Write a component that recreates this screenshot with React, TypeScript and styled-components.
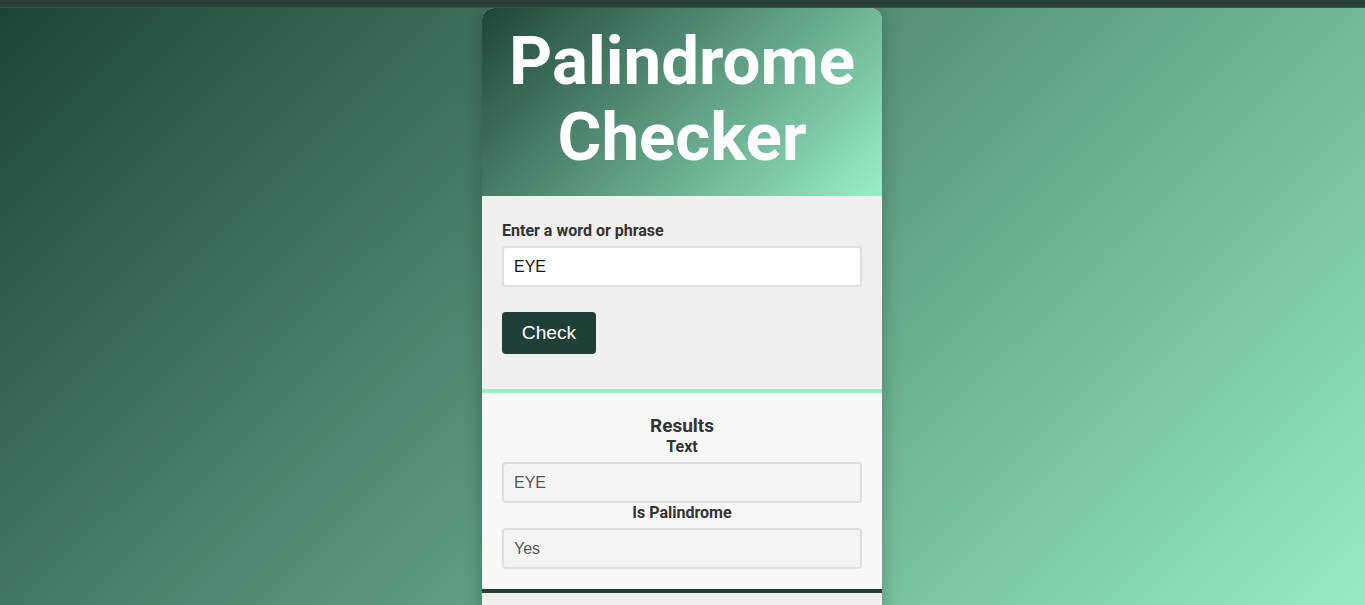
import React from "react";
import styled, { createGlobalStyle } from "styled-components";

const GlobalStyle = createGlobalStyle`
  html, body { margin: 0; padding: 0; }
  body {
    font-family: Roboto, "Liberation Sans", sans-serif;
    background: #2a3e37;
    min-height: 605px;
    overflow: hidden;
  }
`;

const Page = styled.div`
  min-height: 605px;
  display: flex;
  flex-direction: column;
`;

const TopBar = styled.div`
  height: 7px;
  background: #2b3f38;
  border-bottom: 1px solid #3e514a;
  flex: none;
`;

const Main = styled.main`
  flex: 1;
  background: linear-gradient(135deg, #1e4437 0%, #99efc7 100%);
  display: flex;
  justify-content: center;
  align-items: flex-start;
  height: 597px;
  overflow: hidden;
  padding-right: 1px;
`;

const Card = styled.div`
  width: 400px;
  border-radius: 12px 12px 0 0;
  overflow: hidden;
  box-shadow: 0 4px 20px rgba(0, 0, 0, 0.25);
  background: #f0f0f0;
  min-height: 640px;
`;

const Header = styled.header`
  background: linear-gradient(135deg, #1f4437 0%, #99efc7 100%);
  padding: 15px 10px 21px;
  text-align: center;
`;

const Title = styled.h1`
  margin: 0;
  color: #ffffff;
  font-family: Roboto, sans-serif;
  font-weight: 700;
  font-size: 67.2px;
  line-height: 76px;
`;

const FormSection = styled.section`
  background: #f0f0f0;
  padding: 25px 20px 35px;
  display: flex;
  flex-direction: column;
  align-items: flex-start;
`;

const Label = styled.label`
  display: block;
  font-family: Roboto, sans-serif;
  font-weight: 700;
  font-size: 16px;
  line-height: 19px;
  color: #333333;
  margin-bottom: 6px;
`;

const Field = styled.div<{ $muted?: boolean }>`
  box-sizing: border-box;
  width: 360px;
  height: 41px;
  border: 2px solid #dddddd;
  border-radius: 4px;
  background: ${(p) => (p.$muted ? "#f4f4f4" : "#ffffff")};
  padding: 0 10px;
  display: flex;
  align-items: center;
  font-family: "Liberation Sans", Arial, sans-serif;
  font-size: 16px;
  color: ${(p) => (p.$muted ? "#555555" : "#111111")};
`;

const Button = styled.button`
  margin-top: 25px;
  width: 94px;
  height: 42px;
  border: none;
  border-radius: 4px;
  background: #1f4036;
  color: #ffffff;
  font-family: "Liberation Sans", Arial, sans-serif;
  font-size: 19.2px;
  padding: 0;
  cursor: pointer;
`;

const Results = styled.section`
  background: #f8f8f8;
  border-top: 4px solid #98efc6;
  border-bottom: 4px solid #1f4036;
  padding: 22px 20px 20px;
  display: flex;
  flex-direction: column;
  align-items: center;
`;

const ResultsTitle = styled.h2`
  margin: 0;
  font-family: Roboto, sans-serif;
  font-weight: 700;
  font-size: 19px;
  line-height: 22px;
  color: #333333;
`;

const ResultLabel = styled.div`
  font-family: Roboto, sans-serif;
  font-weight: 700;
  font-size: 16px;
  line-height: 19px;
  color: #333333;
  margin-bottom: 6px;
`;

const Footer = styled.div`
  background: #f0f0f0;
  height: 40px;
`;

export default function App() {
  return (
    <>
      <GlobalStyle />
      <Page>
        <TopBar />
        <Main>
          <Card>
            <Header>
              <Title>
                Palindrome
                <br />
                Checker
              </Title>
            </Header>
            <FormSection>
              <Label>Enter a word or phrase</Label>
              <Field>EYE</Field>
              <Button>Check</Button>
            </FormSection>
            <Results>
              <ResultsTitle>Results</ResultsTitle>
              <ResultLabel>Text</ResultLabel>
              <Field $muted>EYE</Field>
              <ResultLabel>Is Palindrome</ResultLabel>
              <Field $muted>Yes</Field>
            </Results>
            <Footer />
          </Card>
        </Main>
      </Page>
    </>
  );
}
